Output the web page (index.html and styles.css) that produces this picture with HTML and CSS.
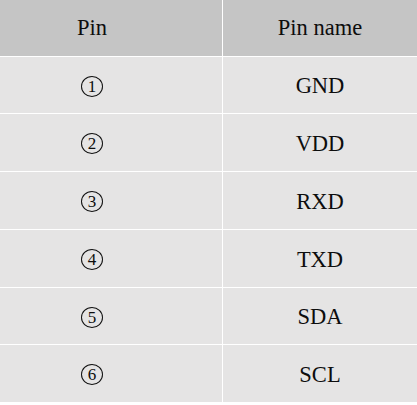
FILE: index.html
```html
<!DOCTYPE html>
<html>
<head>
<meta charset="utf-8">
<link rel="stylesheet" href="styles.css">
</head>
<body>
<div class="pin-table">
  <div class="cell head pin">Pin</div>
  <div class="cell head">Pin name</div>
  <div class="cell pin"><span class="circ">1</span></div>
  <div class="cell">GND</div>
  <div class="cell pin"><span class="circ">2</span></div>
  <div class="cell">VDD</div>
  <div class="cell pin"><span class="circ">3</span></div>
  <div class="cell">RXD</div>
  <div class="cell pin"><span class="circ">4</span></div>
  <div class="cell">TXD</div>
  <div class="cell pin"><span class="circ">5</span></div>
  <div class="cell">SDA</div>
  <div class="cell pin"><span class="circ">6</span></div>
  <div class="cell">SCL</div>
</div>
</body>
</html>
```
FILE: styles.css
```css
html, body {
  margin: 0;
  padding: 0;
  background: #ffffff;
}
.pin-table {
  display: grid;
  grid-template-columns: 222px 1fr;
  grid-template-rows: 56px 56px 57px 57px 57px 56px 57px;
  gap: 1px;
  width: 417px;
  background: #ffffff;
  font-family: "Liberation Serif", "Times New Roman", serif;
  font-size: 22.5px;
  color: #0d0d0d;
}
.cell {
  display: flex;
  align-items: center;
  justify-content: center;
  padding-top: 2px;
  background: #e5e4e4;
}
.cell.head {
  padding-top: 0;
  background: #c5c5c5;
}
.cell.pin {
  padding-right: 38px;
}
.circ {
  display: inline-flex;
  align-items: center;
  justify-content: center;
  width: 20px;
  height: 19px;
  border: 1.2px solid #111111;
  border-radius: 50%;
  font-size: 17px;
  line-height: 1;
}
```
